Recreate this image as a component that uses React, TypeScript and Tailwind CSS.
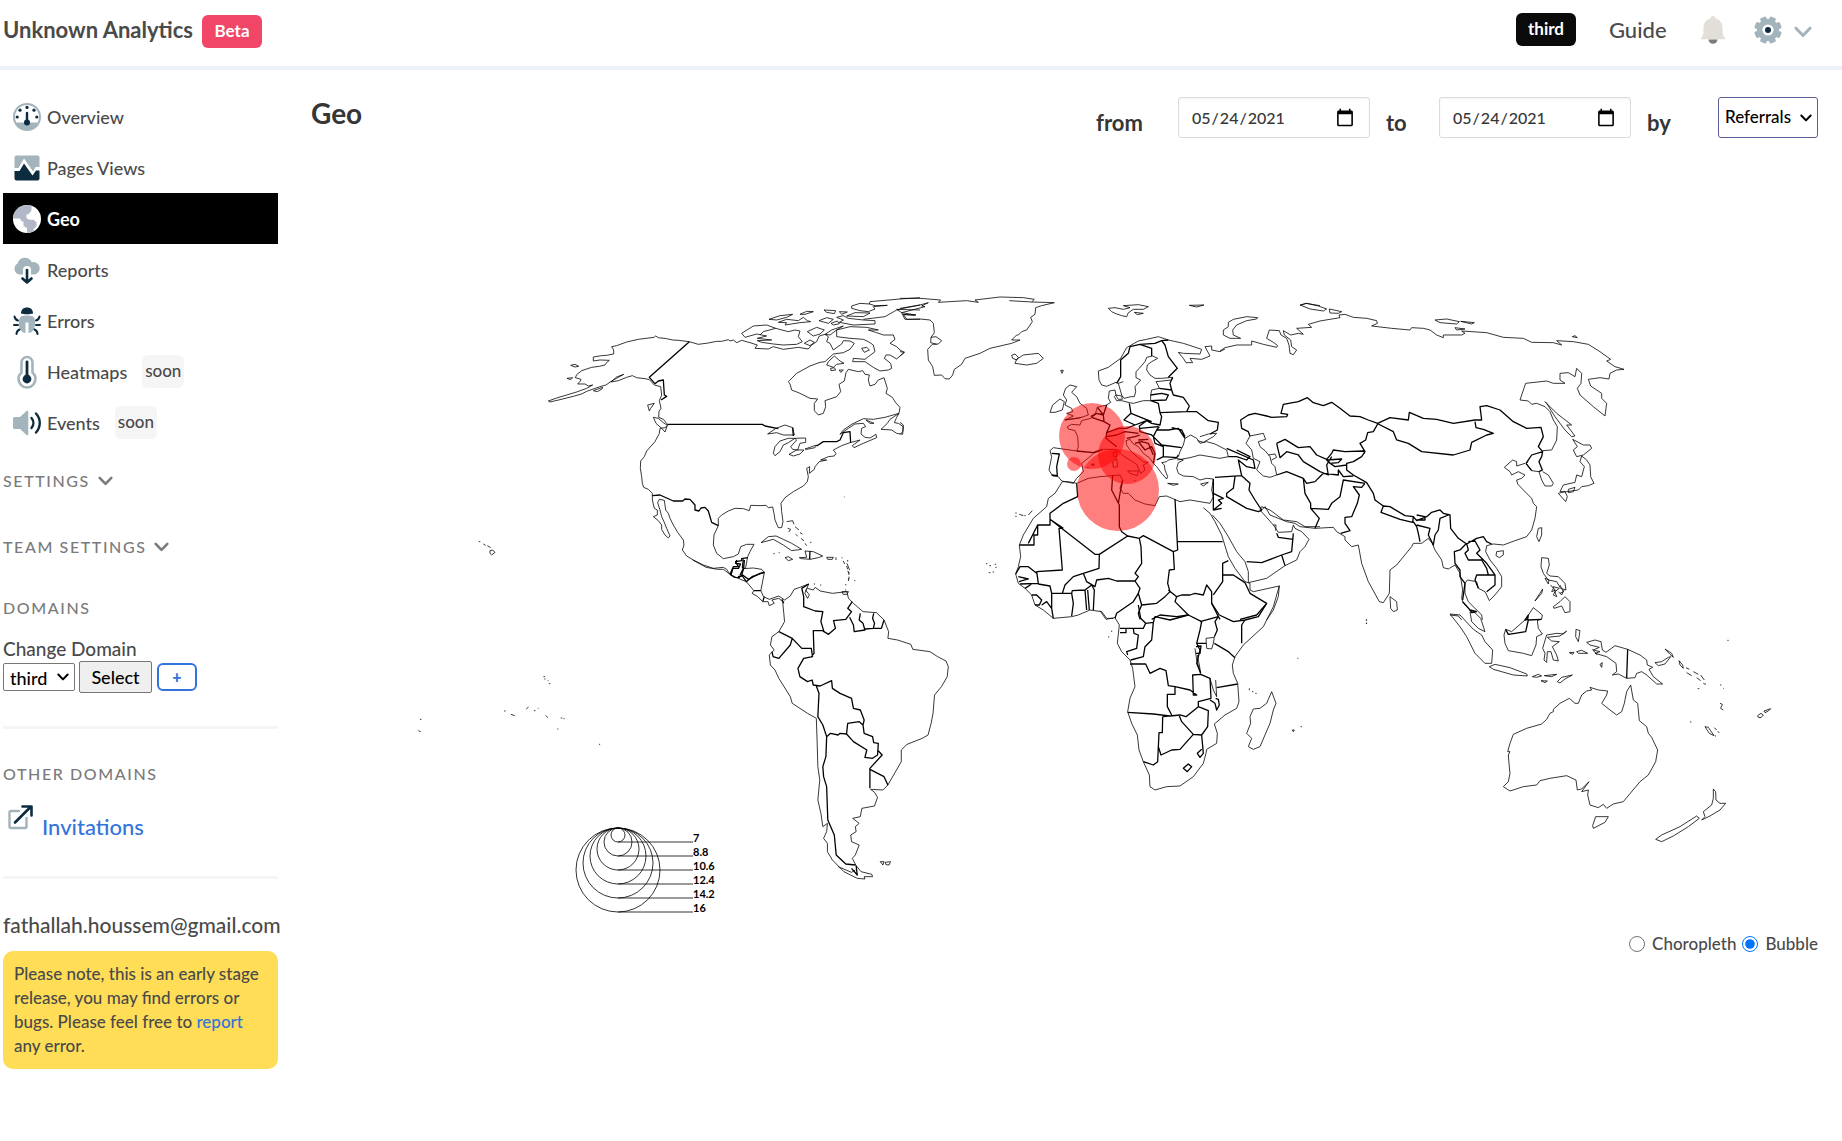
import { useState } from "react";
import type { ReactNode } from "react";

const SLATE = "#a4b4bc";
const NAVY = "#0d2c40";

/* ---------- icons ---------- */

function Icon({ children, box = "0 0 28 28", className = "size-7" }: { children: ReactNode; box?: string; className?: string }) {
  return (
    <svg viewBox={box} className={`shrink-0 ${className}`} fill="none" aria-hidden="true">
      {children}
    </svg>
  );
}

const GaugeIcon = () => (
  <Icon>
    <circle cx="14" cy="14" r="14" fill={SLATE} />
    <path d="M3.4 19.5a12 12 0 1 1 21.2 0z" fill="#fff" />
    <path d="M14 10v10" stroke={NAVY} strokeWidth="2.4" strokeLinecap="round" />
    <circle cx="14" cy="19.5" r="3" fill={NAVY} />
    <g fill={NAVY}>
      <circle cx="14" cy="4.4" r="1.6" />
      <circle cx="7" cy="7.2" r="1.6" />
      <circle cx="21" cy="7.2" r="1.6" />
      <circle cx="4.2" cy="14" r="1.6" />
      <circle cx="23.8" cy="14" r="1.6" />
    </g>
  </Icon>
);

const PulseIcon = () => (
  <Icon>
    <path d="M3.5 1.5h21a2 2 0 0 1 2 2V13h-4l-2.4 4.5L11 4.5 5.5 14h-4V3.500a2 2 0 0 1 2-2z" fill={SLATE} />
    <path d="M1.500 17h5L11 9.500 19.500 21.500l3.500-5h3.500v8a2 2 0 0 1-2 2h-21a2 2 0 0 1-2-2z" fill={NAVY} />
  </Icon>
);

const GlobeIcon = () => (
  <Icon>
    <circle cx="14" cy="14" r="14" fill="#fff" />
    <path d="M0 13.500A14 14 0 0 1 18.500.8v5l-3 3.500h-2v4l3 1.500h4l3 2.500v4l-3 3v2A14 14 0 0 1 14 28v-5l-3.500-2v-4L8 15.500l-1-2z" fill="#b3b8c6" />
  </Icon>
);

const CloudIcon = () => (
  <Icon>
    <path d="M6 18.500A6 6 0 0 1 4.600 7.500 7.500 7.500 0 0 1 18.800 6.300 6.200 6.200 0 1 1 22 18.500h-4V14a4 4 0 0 0-8 0v4.500z" fill={SLATE} />
    <path d="M14 14v12M9.500 22.500l4.500 4 4.500-4" stroke={NAVY} strokeWidth="2.600" strokeLinecap="round" strokeLinejoin="round" />
  </Icon>
);

const BugIcon = () => (
  <Icon>
    <path d="M8 6.500C8 2.500 10.500.5 14 .5s6 2 6 6c-3 1-9 1-12 0z" fill={NAVY} />
    <path d="M8 9.500c3-1.200 9-1.200 12 0 2 1.500 2 4 2 7 0 6-2.500 9-6.500 9.500V15.500h-3V26C8.500 25.500 6 22.500 6 16.500c0-3 0-5.500 2-7z" fill={SLATE} />
    <path d="M1.500 9.500c.5 2.500 1.500 3.500 3.500 4M26.500 9.500c-.5 2.500-1.500 3.500-3.500 4M1 18h4M23 18h4M3.500 27c0-2.500 1-3.500 3-4.500M24.500 27c0-2.500-1-3.500-3-4.500" stroke={NAVY} strokeWidth="2" strokeLinecap="round" />
  </Icon>
);

const ThermometerIcon = () => (
  <Icon box="0 0 28 34" className="h-[34px] w-7">
    <path d="M8.500 17.500V7.500a5.500 5.500 0 0 1 11 0v10a8.500 8.500 0 1 1-11 0z" stroke={SLATE} strokeWidth="2.600" />
    <path d="M14 7v16" stroke={NAVY} strokeWidth="2.800" strokeLinecap="round" />
    <circle cx="14" cy="24" r="4.400" fill={NAVY} />
  </Icon>
);

const SpeakerIcon = () => (
  <Icon>
    <path d="M1.500 8H7l6.500-6c.8-.7 1.800-.3 1.800.8v22.400c0 1.100-1 1.500-1.800.8L7 20H1.500A1.500 1.500 0 0 1 0 18.500v-9A1.500 1.500 0 0 1 1.500 8z" fill={SLATE} />
    <path d="M18.500 9c2.500 3 2.500 7 0 10M23 4.500c5 5.500 5 13.500 0 19" stroke={NAVY} strokeWidth="2.400" strokeLinecap="round" />
  </Icon>
);

const ExternalIcon = () => (
  <Icon>
    <path d="M13 9H5a1.500 1.500 0 0 0-1.500 1.500v14A1.500 1.500 0 0 0 5 26h14a1.500 1.500 0 0 0 1.500-1.500V16" stroke={SLATE} strokeWidth="2.400" strokeLinecap="round" />
    <path d="M9 20.500 24 5.500M16.500 4.500h9v9" stroke={NAVY} strokeWidth="2.600" strokeLinecap="round" strokeLinejoin="round" />
  </Icon>
);

const BellIcon = () => (
  <Icon>
    <path d="M14 0a2.500 2.500 0 0 1 2.500 2.500c4.500 1.200 7 4.500 7 9.500v5l1.500 4c.8.5 1.300 1 1.300 2.300H1.700C1.700 22 2.200 21.500 3 21l1.500-4v-5c0-5 2.500-8.300 7-9.500A2.500 2.500 0 0 1 14 0z" fill="#e2dfd9" />
    <path d="M9.500 23.600h9a4.500 4.200 0 0 1-9 0z" fill="#7c7c7c" />
  </Icon>
);

const GearIcon = () => (
  <Icon>
    <g fill={SLATE}>
      <circle cx="14" cy="14" r="11" />
      {[22.5, 67.5, 112.5, 157.5].map((a) => (
        <rect key={a} x="10.700" y="0.300" width="6.600" height="27.400" rx="1.500" transform={`rotate(${a} 14 14)`} />
      ))}
    </g>
    <circle cx="14" cy="14" r="5.600" fill="#fff" />
    <circle cx="14" cy="14" r="3" fill={NAVY} />
  </Icon>
);

const Chevron = ({ color, className }: { color: string; className: string }) => (
  <Icon box="0 0 18 12" className={className}>
    <path d="M2 2.200 9 9.500l7-7.300" stroke={color} strokeWidth="3" strokeLinecap="round" strokeLinejoin="round" />
  </Icon>
);

/* ---------- world map ---------- */

type Sheet = { transform: string; coast: string; border: string };

const SHEETS: Sheet[] = [
  {
    // North America
    transform: "translate(400 280) scale(.33333)",
    coast: `M868 185 835 181 818 180 800 176 775 173 767 168 762 172 715 178 680 186 650 197 635 200 641 210 641 222 620 226 605 227 580 231 580 243 600 240 628 241 618 250 615 255 598 259 575 262 545 272 530 284 526 293 543 298 541 303 533 312 555 312 565 318 578 315 560 325 530 336 500 345 470 354 445 363 450 366 480 359 520 349 545 342 560 334 600 320 618 315 635 303 671 283 650 291 633 306 655 302 680 292 697 287 710 293 735 296 748 299 763 315 782 320 785 345 778 362 783 385 777 395 776 412 790 418 800 430 803 436 795 443 780 445 778 460 765 485 740 513 733 530 722 543 721 565 725 590 727 610 731 622 745 628 757 640 757 660 763 685 772 690 772 705 760 710 775 722 785 735 785 748 795 765 805 774 810 768 800 745 792 725 785 710 780 690 773 668 778 658 793 661 797 690 805 700 810 715 820 735 833 757 850 780 852 795 847 810 860 828 880 840 910 855 940 865 970 862 980 868 990 883
M955 737 955 715 965 705 985 693 1005 685 1030 686 1048 692 1052 676 1080 677 1098 676 1105 683 1118 681 1122 700 1125 720 1135 743 1145 743 1149 725 1145 695 1143 670 1155 653 1180 635 1210 618 1222 605 1225 590 1220 565 1229 560 1228 580 1243 568 1245 560 1258 545 1280 540 1262 540 1285 530 1303 528 1308 520 1300 510 1325 497 1350 488 1380 480 1357 497 1362 503 1390 490 1430 473 1428 463 1410 474 1395 472 1383 462 1385 445 1397 440 1390 430 1365 432 1345 445 1320 463 1330 450 1355 433 1390 416 1420 418 1455 412 1497 400 1500 382 1487 368 1477 352 1458 340 1462 325 1452 293 1435 300 1425 313 1410 318 1405 300 1408 285 1395 283 1388 272 1375 275 1345 268 1338 278 1333 303 1317 313 1322 335 1310 350 1275 362 1277 380 1270 400 1255 405 1243 392 1243 370 1253 357 1230 355 1200 340 1175 330 1170 312 1165 305 1190 280 1230 258 1260 247 1275 245 1300 222 1330 218 1350 208 1363 190 1350 183 1330 182 1325 192 1300 210 1290 190 1280 185 1285 170 1275 163 1258 168 1250 185 1235 195 1225 207 1195 202 1150 208 1120 200 1105 207 1065 205 1072 195 1050 188 1025 181 1010 188 1000 180 990 183 985 179 965 184 950 184 925 189 895 193 868 185
M955 737 942 765 940 795 950 820 970 836 1000 830 1015 822 1022 800 1040 793 1062 793 1050 815 1043 830 1037 863 1030 866 1060 864 1085 868 1094 878
M760 412 775 415 790 428 802 436 795 456 785 445 768 430ZM743 375 763 370 752 385 748 393ZM580 332 608 322 606 327 592 335ZM501 295 518 293 512 299ZM512 256 525 253 536 259 525 261Z
M1497 400 1470 418 1462 430 1443 448 1475 450 1490 460 1508 463 1510 440 1495 430 1483 428 1490 412ZM1398 420 1422 430 1410 430Z
M1103 462 1128 445 1155 435 1178 443 1183 465 1150 465 1130 458ZM1120 520 1125 500 1140 483 1165 475 1185 475 1165 488 1150 495 1140 515 1125 527ZM1185 475 1217 474 1217 487 1200 490 1193 510 1178 508 1172 500 1190 480ZM1167 523 1190 510 1212 510 1200 522 1180 528ZM1215 507 1250 495 1245 503 1220 508Z
M1025 160 1060 138 1100 135 1127 145 1165 155 1185 150 1200 153 1195 170 1207 185 1190 193 1150 195 1120 192 1085 187 1072 182 1115 180 1072 175 1100 168 1070 162 1035 172Z
M1127 145 1090 155 1080 165M1107 118 1140 107 1178 103 1160 112 1130 120ZM1135 127 1160 118 1195 122 1210 112 1222 122 1232 125 1200 128 1155 135 1160 128ZM1200 103 1220 94 1240 95 1215 103ZM1272 90 1307 92 1303 101 1280 97ZM1318 95 1342 96 1325 103ZM1257 122 1280 113 1300 118 1285 130ZM1293 130 1312 123 1318 131 1300 135ZM1310 112 1330 107 1345 115 1390 120 1425 122 1425 132 1360 135 1318 127 1330 120ZM1222 155 1250 142 1273 150 1260 162 1240 168ZM1213 190 1230 180 1243 187 1230 197ZM1275 163 1295 150 1330 138 1310 150 1290 165Z
M1355 78 1380 70 1408 72 1425 77 1462 76 1420 80 1425 87 1405 95 1380 92 1355 85ZM1340 108 1365 98 1410 99 1390 110ZM1560 53 1500 57 1410 65 1408 72M1390 118 1455 110 1490 90 1510 85 1560 75M1560 90 1490 88 1505 98 1548 105 1510 103 1520 118 1560 118
M1310 150 1350 140 1400 142 1435 150 1405 150 1430 158 1450 165 1480 165 1485 178 1470 190 1490 200 1500 210 1513 217 1490 237 1470 225 1458 225 1453 235 1472 250 1475 265 1465 270 1440 273 1420 262 1395 245 1358 245 1360 235 1395 238 1405 230 1425 215 1420 195 1405 185 1390 178 1350 175 1310 170ZM1385 205 1400 202 1408 210 1393 217ZM1285 245 1303 228 1320 243 1332 250 1310 253 1300 262 1280 255ZM1292 265 1303 263 1307 270 1293 272ZM1318 270 1330 270 1322 277Z
M236 785h5M250 792 257 796M262 797 272 803M270 812 278 810 285 817 275 825 270 820ZM1333 650v2
M1083 788 1105 770 1128 768 1150 778 1175 790 1205 808 1175 812 1150 795 1120 778ZM1155 833 1165 830 1178 838 1165 842ZM1198 833 1220 832 1215 813 1240 815 1268 828 1255 833 1230 838 1205 836ZM1280 832 1300 832 1297 838 1283 838ZM1160 725 1178 722 1182 733M1163 745 1172 748 1166 756M1185 740 1197 750M1187 763 1193 768M1200 758 1207 762M1203 775 1212 783M1215 790 1220 797M1230 787h4M1120 821h4M1136 818h3M1308 832v8M1326 832v3M1330 843 1334 852M1340 858 1343 868M1343 873 1347 880M1347 890v8`,
    border: `M868 185 748 292 765 311 775 303 790 300 793 345 800 349 783 360M803 433H1087L1095 438 1135 446M1178 443 1180 468M1250 498 1270 485 1310 485 1320 480 1330 458 1350 455 1352 488M757 647 780 645 820 663H848L855 657 870 658 885 675 885 690 897 693 903 684 915 682 925 693 935 727 955 737M1043 833 1025 836 1025 842 1007 845 1015 860 1000 860 990 883M1030 838 1027 865M1030 866 1020 885M1015 893 1028 885 1045 898M1045 898 1065 888 1080 880 1094 877M1230 813 1229 838M990 883 1003 892 1020 893`,
  },
  {
    // Greenland, Europe, north Africa, Middle East
    transform: "translate(900 280) scale(.33333)",
    coast: `M0 55 60 55 122 60 115 67 200 62 235 67 225 60 300 51 370 53 403 58 395 66 463 68 425 77 407 83 405 103 392 112 397 125 380 150 365 155 355 165 350 165 335 180 360 180 335 190 270 205 240 220 195 235 185 253 163 268 158 285 148 297 135 296 125 285 103 286 98 260 85 240 83 208 97 193 115 192 125 182 108 170 93 172 103 158 100 130 90 120 60 117 15 118 5 98 75 80 65 78 85 68 60 75 0 85M93 172 92 188 110 193M0 215 13 217 0 228M0 427 10 435 8 455 0 463M328 62 395 66M10 104 45 106
M335 226 345 222 355 232 350 240 338 235ZM350 238 370 225 415 220 430 235 410 250 380 255 345 250ZM482 271H490L486 280Z
M625 85 645 83 670 88 690 83 670 77 715 74 745 80 730 88 700 88 685 98 680 110 665 107 645 100 635 95ZM703 97 730 100 712 104ZM868 76 912 75 890 81ZM1202 76 1218 70 1260 77
M1073 113 1040 110 1000 118 985 127 985 140 970 150 970 165 990 175 1022 175 1000 165 998 150 1010 135 1040 122 1070 117Z
M805 180 775 170 740 178 715 183 680 203 662 235 625 262 595 273 597 300 605 315 620 319 648 307 655 310 665 345 672 355 693 350 703 350 707 335 705 320 722 300 708 293 708 275 718 265 735 245 740 232 758 228 773 235 755 245 742 255 740 270 750 285 765 295 785 295 818 292 815 300 768 305 775 318 778 325 755 330 752 345 752 362 730 362 700 370 688 368 665 362 650 362 643 350 648 345 645 330 628 333 625 355 632 367 620 375 608 378 592 382 585 405 572 415 545 422 540 435 515 433 502 440 505 447 525 452 533 470 535 500 530 513 460 503 450 512 455 530 447 570 458 588 475 590 485 603 520 610 530 595 550 575 545 550 570 530 580 520 610 508 645 508 655 513 670 528 690 540 710 553 715 565 722 580 735 570 730 555 745 547 730 545 705 525 690 510 680 495 678 482 690 478 698 490 715 500 730 520 750 535 760 550 770 560 785 580 800 597 803 590 795 570 793 555 785 548 800 545 805 540 830 535 850 540 835 548 830 565 835 580 850 588 880 590 900 600 920 595 940 597 935 630 940 650 930 670 900 665 870 660 840 665 800 648 778 650 765 677 735 672 705 660 685 640 670 640 660 625 668 600 660 585 600 590 565 595 530 610 505 605 487 605 465 640 445 655 440 680 400 715 370 765 358 795 362 830 355 860 347 882 355 910 375 925 395 945 405 975 430 990 460 1015 515 1010 535 1005 570 990 605 995 620 1015 640 1015
M655 310 670 305M648 345 665 348 667 358 655 358 650 350ZM832 540 870 533 900 525 960 535 985 530 980 510 945 492 920 485 900 490 890 475 872 465 855 475 850 495 840 515 835 530M900 470 925 462 950 460 940 470 910 487 893 482M805 180 850 190 905 208 900 222 850 220 835 217 850 235 858 248 878 248 870 235 905 238 930 228 915 200 935 198 935 210 960 215 975 207
M497 325 510 315 530 320 515 337 530 350 540 370 560 385 565 405 535 415 495 420 520 408 500 400 518 395 515 385 495 375 500 360 490 345ZM450 397 458 375 480 357 493 365 487 390 465 397ZM493 420 545 412
M638 518 648 513 650 530 642 530ZM638 545 650 535 653 560 640 562ZM683 573 715 573 712 587 690 580ZM562 563h4M573 553 583 552 580 558ZM803 610 835 612 820 616ZM902 612 925 607 910 618ZM703 602h4M346 699h4M346 709h4M358 703 370 707M373 707h4M385 705 397 692M258 851h4M268 857h5M284 853h4M286 862h4M266 878h5M278 876h4
M910 683 930 700 945 725 965 765 985 830 1005 865 1035 905 1050 910 1050 930 1060 935 1138 918 1135 950 1120 990 1100 1020M937 705 960 730 985 770 1010 815 1035 845 1045 875 1045 908 1100 895 1155 857 1190 840 1200 815 1215 800 1227 778 1205 755 1185 745 1180 735 1175 755 1135 757 1120 735 1080 690 1085 680 1110 690 1150 720 1190 725 1215 740 1260 740M1120 735 1128 735 1127 752`,
    border: `M805 180 785 182 765 190 720 193 690 200 685 220 662 240 662 290 650 310M720 193 755 205 755 228M785 182 795 195 805 230 832 265 805 292M818 292 810 310 815 330 778 325M752 345 785 340 805 345 798 360 752 362M815 330 820 345 850 352 868 378 860 395 780 398 775 370 752 362M860 395 890 395 925 422 955 427 952 450 930 462M688 370 693 400 680 412 672 420 705 435 740 422 755 430 780 435 785 410 780 398M693 400 730 415 755 425M778 440 770 450 805 450 835 445 855 475M855 470 845 450 815 443M770 450 760 470 785 495 845 503M760 470 765 490 790 500 790 530 770 540M790 530 830 533 835 525M740 422 718 438 720 455 755 465 760 470M720 445 775 440M705 435 680 445 655 445 620 458 630 435 612 425 575 412M592 382 610 405 590 400 572 410M620 375 610 405 612 425M620 458 618 475 650 500M620 470 650 465 675 455 715 460M680 475 705 470 720 465M530 513 580 518 607 508M455 520 478 522 470 560 472 587 455 585M705 490 725 485 745 490 760 525M715 485 735 510 755 500 765 520 760 550M715 480 745 478
M530 610 533 650 490 670 450 700 450 718 585 823 598 823 683 768 718 775 730 767 820 815 833 810 825 657M638 585 635 630 658 675 658 740 665 755 683 768M668 600 660 640 655 670M833 785H968M450 718V735H413V765H402V795H358M413 735 385 790M490 745H477L487 870 410 875 415 910 360 912M355 890 385 897 357 905M347 882 360 860 385 860 410 880M450 718 490 745M598 823 597 865 550 880 520 890 495 915 487 940 455 940 450 918 415 912M550 880 560 905 585 920 590 900 625 895 650 903 705 903 715 890 705 880 725 850 723 800 718 775M820 815 823 868 808 870 803 910 810 935 795 950 770 970 725 975 715 940 720 925 705 903M487 940 515 940 517 932 555 930 575 915 583 930 580 990M515 940 520 970 515 1008M555 930 560 990M563 930 568 990M375 925 395 912M395 945 410 945 425 960 418 975 405 975M425 975 440 965 455 985 455 940M455 985 460 1015M725 975 715 1000 720 1018M715 940 700 965 650 1000 645 1015M805 930 830 950 845 945 870 945 885 940 910 945 920 915 935 935 935 970 950 1000 960 1018M830 950 825 965 865 1005 830 1010 780 1005 755 1018M940 945 968 905 968 885 1000 885 1035 908 1050 940 1100 970 1070 1005 1020 1018M968 885 968 850 985 842
M940 597V690L965 670 955 660 970 655 940 640M945 592 1025 587 1050 610 1047 630 1065 660 1085 690 1075 695 1040 685 980 650 980 640 1000 625 1005 590M1025 587 1015 540 1040 560 1065 565 1060 540 980 505M940 690 965 685M985 530 1010 530 1040 540 1050 530 1010 510M1040 845 1085 848 1145 825 1175 815 1180 760M1145 825 1155 857M1130 760 1135 772 1180 778`,
  },
  {
    // Russia, Asia
    transform: "translate(1220 280) scale(.33333)",
    coast: `M0 213 15 203 50 195 95 195 95 183 130 193 170 202 173 197 160 187 140 175 148 150 178 152 183 165 200 175 207 195 210 220 220 224 230 210 215 200 212 180 193 165 190 152 212 165 235 160 250 163 230 145 275 142 265 133 300 123 360 113 357 105 375 103 400 112 440 115 470 122 472 130 455 138 515 145 570 150 575 143 610 145 630 150 650 165 670 173 670 165 725 165 735 160 725 153 800 158 850 172 910 175 935 187 1000 188 1025 195 1010 182 1060 185 1105 193 1140 215 1172 238 1160 243 1185 260 1212 268 1190 270 1170 280 1167 297 1140 293 1105 298 1112 318 1145 340 1145 355 1160 370 1155 408 1120 380 1080 345 1072 325 1083 310 1085 280 1070 265 1065 290 1045 278 1020 280 1020 300 1035 310 1000 310 980 303 917 310 900 360 925 363 935 373 950 370 975 380 990 395 1000 420 1012 440 1010 480 995 510 968 512
M968 575 985 585 1000 610 995 618 975 618 965 600 957 575 935 572 918 550 925 545M915 550 890 558 890 545 878 540 853 562 870 575 875 585 895 575 915 585 905 595 890 600 893 612 910 630 935 655 940 670 950 680 945 715 935 750 920 770 885 782 850 795 820 792 800 797 797 815 810 840 830 865 845 890 845 920 825 945 808 962 800 945 795 935 775 925 770 905 742 900 735 910 735 940 745 965 770 990 785 1005 787 1020M765 995 750 990 730 970 725 955 728 930 720 880 705 855 685 867 670 863 665 840 645 810 637 790 625 775 605 790 580 790 575 800 530 855 510 870 508 940 490 968 478 965 445 905 425 850 415 795 395 800 375 780 375 770 350 755 340 742 285 745 240 740 225 730 200 725 150 705 135 680 120 695
M980 370 975 365 1010 400 1055 435 1040 435 1065 468 1055 470 1035 450 1005 410ZM1058 478 1090 495 1110 495 1115 505 1090 525 1070 530 1060 510 1072 500ZM1085 528 1100 540 1110 555 1112 590 1122 610 1105 617 1085 620 1075 630 1040 635 1020 635 1030 615 1065 607 1070 585 1085 590 1093 560 1080 545ZM1015 640 1035 635 1042 650 1037 665 1015 640ZM1045 628 1065 622 1060 635 1045 638Z
M955 745 965 743 965 765 957 785 950 770ZM830 815 850 812 850 825 838 833 828 827ZM965 833 985 835 988 855 980 880 990 888 1015 890 1035 910 1038 930 1022 925 1010 905 985 900 970 880 963 860ZM975 895 987 900 985 912ZM1000 920 1018 925 1005 935ZM1005 935 1010 950 1000 945ZM1015 935 1025 945 1032 930M992 915 1000 925 995 935 1008 930M1020 915 1030 935 1020 940M1000 980 1020 965 1035 950 1050 965 1050 995 1035 998 1025 978 1002 985ZM968 927 965 940 945 963ZM510 950 530 965 532 990 520 995 512 985ZM690 1005 715 1008 725 1020M240 75 260 70 295 78 320 87 310 93 270 87ZM328 87 365 95 355 100 330 99ZM645 120 680 117 718 125 710 132 660 128ZM722 124 763 128 755 132ZM705 143 735 147 710 150ZM1057 170 1065 167 1072 173Z
M90 468 130 460 137 478 115 485 120 500 135 512 150 530 155 550 165 560 170 585 150 592 130 588 110 570 120 545 100 535 95 510 78 490ZM145 525 165 522 170 532 155 540`,
    border: `M90 468 85 455 65 445 62 420 85 405 105 400 140 408 155 412 200 410 203 403 183 400 190 373 235 365 262 353 280 368 310 377 335 367 360 385 390 408 420 410 445 420 473 430 510 413 565 420 568 397 610 415 650 418 700 430 765 420 785 420 780 380 800 377 840 390 880 425 920 445 963 442 970 470 955 500 968 515 935 525 918 550M765 425 768 443 790 448 820 460 800 465 755 487 750 510 700 525 605 515 565 490 530 480 520 455 475 432M473 432 460 455 443 458 437 480 420 490 435 515 425 530 400 545 380 550 380 570 400 585 440 608 460 640 465 660 490 678 510 680 555 707 580 710 590 722 620 710 635 697 660 690 670 700 690 705 692 745 715 775 740 792 770 775 790 770 800 785 815 792M490 678 483 697 540 718 578 727 580 710M590 705 615 710 615 720 590 720M170 490 195 478 235 503 270 500 290 525 320 538 335 520 340 510 375 515 430 513 435 520M170 490 180 533 200 515 235 525 250 545 300 575 325 585 320 555 335 530M320 540 365 537 355 548 330 550ZM330 550 345 560 380 555M170 585 200 575 250 595 260 610 285 605 310 580 355 585 355 570 370 590 400 588M250 595 255 640 272 670 272 685 325 688 335 670 360 650 370 600 435 610M272 685 298 715 285 745M435 610 425 622 400 620 418 645 412 670 395 710 375 712 375 730 390 752 362 760M580 725 590 740 595 760 600 785M590 735 630 745 625 765 640 795 645 765 655 750 660 715 685 705M740 790 720 810 703 815 705 850 720 870 720 890 735 910 728 960M740 790 745 810 735 820 745 840 785 840 800 865 805 885 770 885 765 900 775 925M745 785 765 783 780 810 770 820 800 850 825 885 825 915 800 935M805 885 825 885M918 550 935 572M968 515 965 530 957 545 967 570 957 575M728 965 750 990 770 995`,
  },
  {
    // Central and South America, Pacific islands
    transform: "translate(400 560) scale(.38265 .33333)",
    coast: `M765 0 800 22 830 28 845 28 865 45 890 58 905 65 925 92 920 100 935 110 948 125 962 125 965 137 978 130 972 120 990 115 1000 125 1003 160 1005 185 990 215 972 230 968 255 978 270 965 285 968 315 980 330 990 355 1020 410 1025 430 1045 445 1065 460 1088 475 1090 540 1092 620 1097 660 1092 720 1100 760 1105 800 1117 790 1115 815 1107 835 1117 850 1117 875 1130 900 1160 935 1195 955 1215 957 1213 950 1235 950 1233 943 1205 935 1192 917 1182 895 1190 885 1200 855 1180 845 1178 825 1192 815 1190 800 1200 790 1183 775 1203 770 1207 745 1240 738 1248 712 1240 697 1230 688 1262 690 1275 675 1290 645 1310 605 1310 570 1325 553 1365 535 1380 525 1388 490 1393 460 1397 405 1415 380 1430 350 1433 320 1427 303 1405 290 1385 275 1340 268 1335 253 1300 240 1275 235 1277 215 1265 180 1245 158 1210 155 1185 130 1172 115 1168 95 1130 100 1098 93 1085 82 1080 90 1065 85 1060 90 1070 105 1065 115 1058 100 1068 72 1045 82 1030 88 1020 108 1005 120 990 108 965 118 950 110 943 92 952 38
M1155 95 1172 95 1168 103 1158 103ZM1255 905 1265 905 1262 915ZM1268 907 1282 905 1278 915 1270 914ZM1145 920 1180 937 1190 930M1083 70v4M1098 75h3M1170 0v5M1168 10 1175 30M1173 35v10M1172 55v8M1165 72v4M1187 62h3M1163 90h3
M375 350h4M377 357h3M386 362h2M389 371h4M272 453h4M290 463 300 467M330 447 336 441M350 452h4M360 445h2M381 466 386 473M420 474h4M427 476h3M411 507h3M520 553h3M52 478h4M48 512 54 515`,
    border: `M900 0 898 25M880 0 877 10 890 12 885 25 870 25 865 45M898 25 893 45 905 65 920 50 952 37M893 48 883 50M925 92 943 92M948 125 952 110M1003 130 998 118M1068 72 1050 85 1055 110 1055 140 1085 153 1105 155 1100 185 1108 215 1105 212 1080 212 1082 280 1075 290M1108 215 1120 223 1138 205 1133 182 1165 178 1180 155 1170 145 1182 125M1175 172 1185 195 1187 215 1215 210 1210 190 1200 180 1203 160M1215 207 1237 205 1240 190 1235 175 1238 160M1237 205 1258 205 1265 180M990 215 1025 235 1020 255 990 295 975 290 972 275M1025 235 1050 265 1075 265 1078 290 1055 295 1040 325 1045 350 1065 365 1077 360 1080 375 1098 378 1128 362 1130 385 1150 400 1180 415 1185 445 1203 450 1213 480 1210 495M1088 378 1095 400 1092 470 1105 495 1115 530 1125 520 1145 525 1150 520 1167 522 1170 490 1200 485 1210 495 1213 520 1235 530 1238 548 1250 550 1248 585 1235 595 1215 592 1220 570 1185 545 1167 522M1115 530 1113 590 1105 620 1107 650 1115 680 1118 780 1135 825 1140 885 1165 912 1190 915M1248 570 1260 585 1228 625 1228 685M1228 628 1265 650 1275 675M1192 917 1195 945 1180 925`,
  },
  {
    // Southern Africa
    transform: "translate(980 540) scale(.33333)",
    coast: `M360 212 378 238 405 233 418 255 412 310 425 335 450 360 458 385 465 440 450 475 443 515 455 550 472 585 477 630 490 665 508 705 510 740 525 750 560 740 600 738 640 710 670 670 678 640 680 628 710 610 712 580 703 552 735 525 770 505 777 485 773 430 760 400 757 375 765 350 790 315 850 260 880 200 898 137 M815 595 800 580 812 550 810 530 820 507 840 505 860 490 875 455 888 490 880 510 870 550 840 620 820 628 805 620ZM678 295 703 292 700 310 695 327 680 325ZM645 325 650 360 662 400 658 375 652 345M690 415 700 450 710 470 707 420M395 272v4M384 291h4M952 355h3M808 445v6M816 455h4M826 460h4M937 570 943 570 940 575ZM962 560 966 560M1160 238v3M1160 248v3`,
    border: `M420 265 490 265 497 250 520 247 525 230 570 240 625 225 665 245 660 270 650 310 660 330 650 370 662 400M420 278 438 278V265M460 265 462 280 475 285 470 325 440 335 443 345M497 250 482 235 475 195M520 247 515 300 495 320 490 350 452 360M450 372H497L510 400 540 385 558 392 565 437 585 440 630 450 650 465 640 465 638 405 662 403 690 415 693 475 655 485 655 500 618 530 600 525 570 528 520 522 443 517M565 437 585 440V463H562V500L575 525M655 500 685 512 683 560 665 585 640 583 605 545 597 525M548 530 547 578H537L533 665 520 675 490 665M548 530 600 525M535 620 543 645 575 630 600 628 640 583M665 585 670 640 660 652 652 640 665 628M610 685 625 672 635 680 622 695ZM690 480 705 490 710 510 718 495 715 478 707 475M710 443 773 432M703 310 745 335 765 353M650 310 678 310M648 320 663 318 660 340 648 340M660 245 715 230 705 245 712 270 703 290M718 225 760 245 795 240 785 255 785 310M795 240 835 230 860 190M695 190 718 225`,
  },
  {
    // South-east Asia, Oceania
    transform: "translate(1360 560) scale(.33333)",
    coast: `M270 162 300 165 340 208 365 225 375 245 398 270 395 310 375 310 345 280 320 230 300 200ZM330 155 345 158 362 175 375 215 355 205 335 185ZM388 320 405 313 450 323 500 342 502 348 460 345 400 328ZM517 350 535 343 545 348 530 352ZM553 347 590 343 575 350ZM543 362 562 363 555 368ZM592 365 605 352 637 345 615 357 600 369Z
M437 208 455 215 495 180 520 143 535 155 547 165 545 177 532 182 535 205 547 222 530 230 528 255 515 287 490 280 445 272 435 250 432 225ZM548 265 560 225 590 220 610 222 620 213 600 228 562 232 575 243 598 245 577 260 590 285 595 303 580 300 573 275 562 275 560 307 552 300 555 280ZM648 208 660 212 655 245 647 230ZM628 278 642 277 638 283ZM650 275 665 271 683 280 655 280ZM720 313 727 308 725 322Z
M680 247 705 240 723 245 727 270 738 277 765 257 803 268 840 285 860 300 862 315 878 322 867 328 880 350 908 372 890 372 860 345 845 335 830 340 825 353 800 355 775 342 757 345 770 335 768 310 740 290 705 280 720 275 700 270 718 262 690 255ZM697 268 712 285M885 308 905 305 925 292 932 290 915 312 895 317ZM915 267 935 280 940 292 930 283ZM957 302 968 315 970 325 960 315ZM978 323 988 328M980 338 995 347M1000 335 1015 343M1010 353 1022 362M1022 345 1033 360M1030 370 1038 373M1013 386h5M1080 375h4M1090 385h2M1102 241h4M1080 430 1087 433 1082 445 1090 450M990 486h4M1035 500 1045 502 1062 527 1048 520ZM1063 503 1070 510M1073 515 1078 518M1065 528h3M1193 467 1203 460 1210 465 1203 473 1195 472ZM1212 453 1232 446 1225 453 1215 458Z
M430 680 445 665 450 640 447 610 445 585 450 575 443 575 450 550 460 523 500 505 545 492 560 478 570 460 580 455 580 448 600 430 628 415 645 430 655 430 665 405 680 393 695 390 690 382 715 390 743 393 740 405 725 430 750 450 770 465 785 455 793 430 800 395 812 375 820 420 833 430 838 482 860 500 865 520 875 532 893 570 887 605 865 645 840 665 790 725 760 732 740 745 730 733 715 743 690 735 683 705 685 690 665 695 687 665 665 687 652 690 648 660 620 647 570 655 540 662 530 675 490 680 450 693ZM707 770 745 770 735 787 700 805 698 797ZM1060 687 1067 695 1068 720 1080 730 1097 730 1080 750 1050 768 1025 780 1035 770 1030 755 1055 735 1060 715ZM1010 768 1018 775 985 800 940 828 905 845 887 838 905 825 960 800Z
M19 179v4M19 188v4`,
    border: `M803 268 800 355M437 208 445 223 465 220 497 215 505 180 545 178M495 180 505 165 503 178ZM330 150 335 158 350 155`,
  },
];

const BUBBLES = [
  { cx: 1092, cy: 436, r: 33 },
  { cx: 1127, cy: 455, r: 29 },
  { cx: 1118, cy: 490, r: 41 },
  { cx: 1074, cy: 464, r: 7 },
];

const SCALE = [
  { label: "7", r: 7 },
  { label: "8.8", r: 14 },
  { label: "10.6", r: 21 },
  { label: "12.4", r: 28 },
  { label: "14.2", r: 35 },
  { label: "16", r: 42 },
];

function WorldMap() {
  return (
    <svg viewBox="311 180 1507 740" className="block w-full" fill="none" role="img" aria-label="Visits by country">
      {SHEETS.map((s) => (
        <g key={s.transform} transform={s.transform} strokeLinejoin="round">
          <path d={s.coast} stroke="#000" strokeOpacity="0.78" strokeWidth="1" vectorEffect="non-scaling-stroke" />
          <path d={s.border} stroke="#000" strokeWidth="1.3" vectorEffect="non-scaling-stroke" />
        </g>
      ))}
      {BUBBLES.map((b) => (
        <circle key={b.cx} {...b} fill="#f00" fillOpacity="0.5" />
      ))}
      {SCALE.map(({ label, r }) => (
        <g key={label}>
          <circle cx="618" cy={828 + r} r={r} stroke="#000" strokeWidth="0.8" />
          <path d={`M618 ${828 + 2 * r}H693`} stroke="#000" strokeWidth="0.8" />
          <text x="693" y={828 + 2 * r} fill="#000" className="text-[11px] font-bold">
            {label}
          </text>
        </g>
      ))}
    </svg>
  );
}

/* ---------- page ---------- */

const NAV: { label: string; icon: ReactNode; active?: boolean; soon?: boolean }[] = [
  { label: "Overview", icon: <GaugeIcon /> },
  { label: "Pages Views", icon: <PulseIcon /> },
  { label: "Geo", icon: <GlobeIcon />, active: true },
  { label: "Reports", icon: <CloudIcon /> },
  { label: "Errors", icon: <BugIcon /> },
  { label: "Heatmaps", icon: <ThermometerIcon />, soon: true },
  { label: "Events", icon: <SpeakerIcon />, soon: true },
];

function SelectBox({ id, label, options, className, wrap }: { id: string; label?: string; options: string[]; className: string; wrap: string }) {
  return (
    <div className={`relative ${wrap}`}>
      <select id={id} aria-label={label} className={`w-full appearance-none bg-white text-black ${className}`}>
        {options.map((o) => (
          <option key={o}>{o}</option>
        ))}
      </select>
      <Chevron color="#000" className="pointer-events-none absolute top-1/2 right-1.5 h-2 w-3 -translate-y-1/2" />
    </div>
  );
}

const heading = "text-base leading-6 tracking-widest text-[#7a7a7a] uppercase";
const dateInput =
  "h-[41px] w-48 rounded-[3px] border border-[#dbdbdb] bg-white px-3 text-base text-[#363636] shadow-[inset_0_1px_2px_rgba(10,10,10,0.05)] [&::-webkit-calendar-picker-indicator]:size-5";
const filterLabel = "pt-3 text-[22px] leading-7 font-bold text-[#363636]";

export default function App() {
  const [mode, setMode] = useState("Bubble");
  return (
    <div className="min-h-screen bg-white font-['Lato',sans-serif] text-lg font-medium text-[#4a4a4a]">
      <header className="flex h-[70px] items-start justify-between border-b-4 border-[#eff1f8] pr-[30px] pl-[3px]">
        <div className="flex items-start pt-[14px]">
          <span className="w-[199px] text-[22px] leading-8 font-bold">Unknown Analytics</span>
          <span className="mt-px flex h-[33px] w-[60px] items-center justify-center rounded-md bg-[#f14668] text-[17px] font-bold text-white">Beta</span>
        </div>
        <nav className="flex items-center pt-[13px]">
          <span className="flex h-[33px] w-[60px] items-center justify-center rounded-md bg-[#0a0a0a] text-[17px] font-bold text-white">third</span>
          <a href="#guide" className="ml-[33px] w-[90px] text-[22px] leading-8">Guide</a>
          <button aria-label="Notifications"><BellIcon /></button>
          <button aria-label="Account settings" className="ml-[27px] flex items-center gap-3">
            <GearIcon />
            <Chevron color={SLATE} className="mt-1 h-3 w-[18px]" />
          </button>
        </nav>
      </header>

      <div className="flex items-start pr-6 pl-[3px]">
        <aside className="w-[275px] shrink-0 pt-[21px]">
          <nav>
            {NAV.map((n) => (
              <a
                key={n.label}
                href={`#${n.label}`}
                className={`flex h-[51px] items-center pl-[10px] ${n.active ? "bg-black font-bold text-white" : ""}`}
              >
                {n.icon}
                <span className="ml-1.5">{n.label}</span>
                {n.soon && <span className="ml-[15px] flex h-[33px] w-[42px] items-center justify-center rounded-md bg-[#f5f5f5] text-[17px]">soon</span>}
              </a>
            ))}
          </nav>

          <button className={`mt-[21px] flex items-center gap-2 ${heading}`}>
            Settings <Chevron color="#7a7a7a" className="h-2.5 w-[15px]" />
          </button>
          <button className={`mt-[42px] flex items-center gap-2 ${heading}`}>
            Team settings <Chevron color="#7a7a7a" className="h-2.5 w-[15px]" />
          </button>
          <h2 className={`mt-[37px] ${heading}`}>Domains</h2>

          <label htmlFor="domain" className="mt-4 block text-[19px] leading-[25px]">Change Domain</label>
          <div className="flex items-center">
            <SelectBox id="domain" options={["third"]} wrap="w-[72px]" className="h-7 rounded-xs border border-[#767676] pl-1.5" />
            <button className="ml-1 h-8 w-[73px] rounded-xs border border-[#767676] bg-[#efefef] text-black">Select</button>
            <button aria-label="Add domain" className="ml-[5px] flex h-7 w-10 items-center justify-center rounded-md border-2 border-[#3273dc] text-base font-black text-[#3273dc]">+</button>
          </div>

          <hr className="mt-[33px] border-0 border-t-3 border-[#f5f5f5]" />
          <h2 className={`mt-[33px] ${heading}`}>Other domains</h2>
          <a href="#invitations" className="mt-4 flex h-12 items-start gap-2 pl-[3px] text-[22px] text-[#3273dc]">
            <ExternalIcon />
            <span className="pt-[9px] leading-8">Invitations</span>
          </a>
          <hr className="mt-[26px] border-0 border-t-3 border-[#f5f5f5]" />

          <p className="mt-[34px] text-[21px] leading-6 whitespace-nowrap">fathallah.houssem@gmail.com</p>
          <p className="mt-[14px] rounded-[10px] bg-[#ffdd57] p-[11px] text-[17px] leading-6">
            Please note, this is an early stage release, you may find errors or bugs. Please feel free to{" "}
            <a href="#report" className="text-[#3273dc]">report</a> any error.
          </p>
        </aside>

        <main className="ml-[33px] min-w-0 flex-1 pt-[27px]">
          <div className="flex items-start">
            <h1 className="mr-auto text-[28px] leading-8 font-bold text-[#363636]">Geo</h1>
            <label htmlFor="from" className={`w-[82px] ${filterLabel}`}>from</label>
            <input id="from" type="date" defaultValue="2021-05-24" className={dateInput} />
            <label htmlFor="to" className={`ml-4 w-[53px] ${filterLabel}`}>to</label>
            <input id="to" type="date" defaultValue="2021-05-24" className={dateInput} />
            <label htmlFor="by" className={`ml-4 w-[71px] ${filterLabel}`}>by</label>
            <SelectBox id="by" options={["Referrals"]} wrap="w-[100px]" className="h-[41px] rounded-[3px] border border-[#5c5c99] pl-1.5 text-[17px]" />
          </div>
          <div className="mt-[42px]">
            <WorldMap />
          </div>
          <div className="mt-3 flex items-center justify-end text-[17px] leading-6">
            {["Choropleth", "Bubble"].map((m) => (
              <label key={m} className="ml-1.5 flex items-center">
                <input type="radio" name="mode" checked={mode === m} onChange={() => setMode(m)} className="mr-[7px] size-4" />
                {m}
              </label>
            ))}
          </div>
        </main>
      </div>
    </div>
  );
}
